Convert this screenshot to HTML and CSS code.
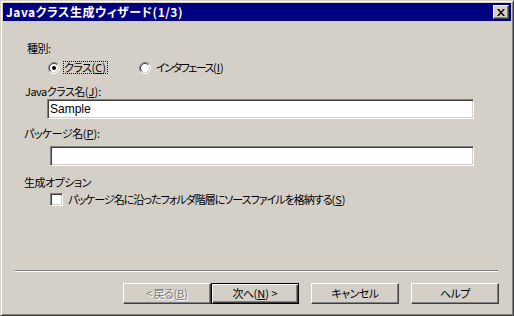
FILE: index.html
```html
<!DOCTYPE html>
<html lang="ja">
<head>
    <meta charset="UTF-8">
    <title>Javaクラス生成ウィザード(1/3)</title>
    <link rel="stylesheet" href="styles.css">
</head>
<body>

<div class="ventana">
    <div class="titulo">
        <span class="titulo-texto">Javaクラス生成ウィザード(1/3)</span>
        <div class="cerrar">
            <svg width="8" height="7" viewBox="0 0 8 7">
                <path d="M0 0h2l2 2.5 2-2.5h2l-3 3.5 3 3.5h-2l-2-2.5-2 2.5h-2l3-3.5z" fill="#000"/>
            </svg>
        </div>
    </div>

    <div class="etiqueta etiqueta-tipo">種別:</div>
    <div class="fila-radio">
        <div class="opcion opcion-clase">
            <svg class="radio" width="12" height="12" viewBox="0 0 12 12">
                <circle cx="6" cy="6" r="4.5" fill="#fff"/>
                <path d="M2.1 9.9A5.5 5.5 0 0 1 9.9 2.1" stroke="#808080" fill="none"/>
                <path d="M9.9 2.1A5.5 5.5 0 0 1 2.1 9.9" stroke="#fff" fill="none"/>
                <path d="M2.8 9.2A4.5 4.5 0 0 1 9.2 2.8" stroke="#404040" fill="none"/>
                <path d="M9.2 2.8A4.5 4.5 0 0 1 2.8 9.2" stroke="#D4D0C8" fill="none"/>
                <circle cx="6" cy="6" r="2" fill="#000"/>
            </svg>
            <span class="texto-opcion foco">クラス<span class="acc">(<u>C</u>)</span></span>
        </div>
        <div class="opcion">
            <svg class="radio" width="12" height="12" viewBox="0 0 12 12">
                <circle cx="6" cy="6" r="4.5" fill="#fff"/>
                <path d="M2.1 9.9A5.5 5.5 0 0 1 9.9 2.1" stroke="#808080" fill="none"/>
                <path d="M9.9 2.1A5.5 5.5 0 0 1 2.1 9.9" stroke="#fff" fill="none"/>
                <path d="M2.8 9.2A4.5 4.5 0 0 1 9.2 2.8" stroke="#404040" fill="none"/>
                <path d="M9.2 2.8A4.5 4.5 0 0 1 2.8 9.2" stroke="#D4D0C8" fill="none"/>
            </svg>
            <span class="texto-opcion texto-interfaz">インタフェース<span class="acc">(<u>I</u>)</span></span>
        </div>
    </div>

    <div class="etiqueta etiqueta-clase">Javaクラス名<span class="acc">(<u>J</u>):</span></div>
    <input type="text" class="campo campo-clase" value="Sample">

    <div class="etiqueta etiqueta-paquete">パッケージ名<span class="acc">(<u>P</u>):</span></div>
    <input type="text" class="campo campo-paquete" value="">

    <div class="etiqueta etiqueta-opciones">生成オプション</div>
    <div class="fila-check">
        <span class="check"></span>
        <span class="texto-check">パッケージ名に沿ったフォルダ階層にソースファイルを格納する<span class="acc">(<u>S</u>)</span></span>
    </div>

    <div class="separador"></div>

    <div class="botones">
        <button class="boton boton-deshabilitado">&lt; 戻る<span class="acc">(<u>B</u>)</span></button>
        <button class="boton boton-defecto">次へ<span class="acc">(<u>N</u>) &gt;</span></button>
        <button class="boton boton-cancelar">キャンセル</button>
        <button class="boton boton-ayuda">ヘルプ</button>
    </div>
</div>

</body>
</html>
```

FILE: styles.css
```css
body {
    margin: 0;
    background-color: #D4D0C8;
    font-family: "Noto Sans CJK JP", sans-serif;
    font-size: 11px;
    font-feature-settings: "palt";
    letter-spacing: -0.5px;
    color: #000;
}

.acc {
    letter-spacing: 0;
}

.ventana {
    box-sizing: border-box;
    width: 514px;
    height: 316px;
    padding: 2px;
    border: 1px solid;
    border-color: #D4D0C8 #404040 #404040 #D4D0C8;
    box-shadow: inset 1px 1px #fff, inset -1px -1px #808080;
    background-color: #D4D0C8;
}

/* barra de titulo */
.titulo {
    display: flex;
    align-items: center;
    height: 18px;
    padding: 0 2px 0 3px;
    background-color: #000080;
    color: #fff;
    font-size: 12px;
    font-weight: bold;
    line-height: 14px;
    letter-spacing: 0.5px;
}

.cerrar {
    margin-left: auto;
    box-sizing: border-box;
    width: 16px;
    height: 14px;
    display: flex;
    align-items: center;
    justify-content: center;
    border: 1px solid;
    border-color: #fff #404040 #404040 #fff;
    box-shadow: inset -1px -1px #808080;
    background-color: #D4D0C8;
}

.etiqueta {
    line-height: 14px;
}

.etiqueta-tipo {
    margin: 20px 0 0 24px;
}

.fila-radio {
    display: flex;
    align-items: center;
    height: 13px;
    margin-top: 6px;
    padding-left: 45px;
}

.opcion {
    display: flex;
    align-items: center;
}

.opcion-clase {
    width: 91px;
}

.texto-opcion {
    margin-left: 4px;
    line-height: 11px;
    border: 1px solid transparent;
    padding: 0 1px 0 0;
}

.foco {
    margin-left: 3px;
    border: 1px dotted #000;
}

.texto-interfaz {
    letter-spacing: -1.5px;
}

.etiqueta-clase {
    margin: 10px 0 0 22px;
}

.campo {
    display: block;
    box-sizing: border-box;
    height: 20px;
    padding: 0 2px;
    border: 1px solid;
    border-color: #808080 #fff #fff #808080;
    box-shadow: inset 1px 1px #404040, inset -1px -1px #D4D0C8;
    background-color: #fff;
    font-family: "Liberation Sans", sans-serif;
    font-size: 12px;
    letter-spacing: 0;
    color: #000;
    outline: none;
}

.campo-clase {
    width: 427px;
    margin: 1px 0 0 44px;
}

.etiqueta-paquete {
    margin: 7px 0 0 21px;
}

.campo-paquete {
    width: 424px;
    margin: 6px 0 0 47px;
}

.etiqueta-opciones {
    margin: 9px 0 0 21px;
}

.fila-check {
    display: flex;
    align-items: center;
    height: 13px;
    margin-top: 4px;
    padding-left: 47px;
}

.check {
    box-sizing: border-box;
    width: 13px;
    height: 13px;
    border: 1px solid;
    border-color: #808080 #fff #fff #808080;
    box-shadow: inset 1px 1px #404040, inset -1px -1px #D4D0C8;
    background-color: #fff;
}

.texto-check {
    margin-left: 5px;
    line-height: 13px;
    letter-spacing: -1px;
}

.separador {
    width: 483px;
    height: 1px;
    margin: 64px 0 0 12px;
    background-color: #808080;
    border-bottom: 1px solid #fff;
}

.botones {
    display: flex;
    margin-top: 11px;
    padding-left: 120px;
}

.boton {
    box-sizing: border-box;
    width: 88px;
    height: 21px;
    padding: 0;
    border: 1px solid;
    border-color: #fff #404040 #404040 #fff;
    box-shadow: inset -1px -1px #808080;
    background-color: #D4D0C8;
    font-family: "Noto Sans CJK JP", sans-serif;
    font-size: 11px;
    font-feature-settings: "palt";
    letter-spacing: -0.5px;
    color: #000;
    line-height: 17px;
}

.boton-deshabilitado {
    color: #808080;
    text-shadow: 1px 1px #fff;
}

.boton-defecto {
    border: 1px solid #000;
    box-shadow: inset 1px 1px #fff, inset -1px -1px #404040, inset -2px -2px #808080;
}

.boton-cancelar,
.boton-ayuda {
    margin-left: 12px;
}
```
